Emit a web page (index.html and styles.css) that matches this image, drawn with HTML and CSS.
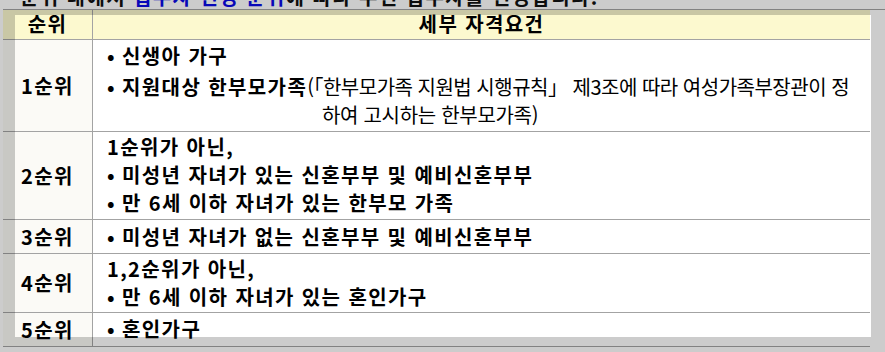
FILE: index.html
```html
<!DOCTYPE html>
<html lang="ko">
<head>
<meta charset="utf-8">
<link rel="stylesheet" href="styles.css">
</head>
<body>
<div class="lead"><div class="lead-text">순위 내에서 <span class="blue">입주자 선정 순위</span>에 따라 우선 입주자를 선정합니다.</div></div>
<div class="grid">
  <div class="c1 head">순위</div>
  <div class="c2 head center">세부 자격요건</div>

  <div class="c1">1순위</div>
  <div class="c2 r1">
    <div class="line"><span class="b">•</span>신생아 가구</div>
    <div class="line gap"><span class="b">•</span>지원대상 한부모가족<span class="reg">(「한부모가족 지원법 시행규칙」 제3조에 따라 여성가족부장관이 정</span></div>
    <div class="line reg indent">하여 고시하는 한부모가족)</div>
  </div>

  <div class="c1">2순위</div>
  <div class="c2 r2">
    <div class="line">1순위가 아닌,</div>
    <div class="line"><span class="b">•</span>미성년 자녀가 있는 신혼부부 및 예비신혼부부</div>
    <div class="line"><span class="b">•</span>만 6세 이하 자녀가 있는 한부모 가족</div>
  </div>

  <div class="c1">3순위</div>
  <div class="c2 r3">
    <div class="line"><span class="b">•</span>미성년 자녀가 없는 신혼부부 및 예비신혼부부</div>
  </div>

  <div class="c1">4순위</div>
  <div class="c2 r4">
    <div class="line">1,2순위가 아닌,</div>
    <div class="line"><span class="b">•</span>만 6세 이하 자녀가 있는 혼인가구</div>
  </div>

  <div class="c1">5순위</div>
  <div class="c2 r5">
    <div class="line"><span class="b">•</span>혼인가구</div>
  </div>
</div>
<div class="shade"></div>
</body>
</html>
```

FILE: styles.css
```css
html, body {
  margin: 0;
  padding: 0;
  background: #ffffff;
  overflow: hidden;
}
body {
  width: 885px;
  height: 352px;
  padding-left: 3px;
  box-sizing: border-box;
  font-family: "Noto Sans CJK KR", "Noto Sans", sans-serif;
  font-size: 20px;
  font-weight: 700;
  letter-spacing: 1.4px;
  color: #000;
  position: relative;
}
.lead {
  height: 9px;
  overflow: hidden;
}
.lead-text {
  margin-top: -13px;
  margin-left: 17px;
  line-height: 20px;
  white-space: nowrap;
  color: #111;
}
.blue { color: #0a0ae6; }

.grid {
  display: grid;
  grid-template-columns: 90px 777px;
  border-top: 1px solid #a3a3a3;
}
.c1, .c2 {
  border-bottom: 1px solid #a3a3a3;
  line-height: 28px;
}
.c1 {
  border-right: 1px solid #a3a3a3;
  background: #fbfaf6;
  display: flex;
  align-items: center;
  justify-content: center;
}
.c2 {
  padding-left: 14px;
  background: #ffffff;
  white-space: nowrap;
}
.head {
  background: #fcf9cf;
  padding-bottom: 1px;
}
.center {
  padding-left: 0;
  text-align: center;
}
.r1 { padding: 2px 0 2px 14px; }
.r2 { padding: 1px 0 2px 14px; }
.r3 { padding: 3px 0 2px 14px; }
.r4 { padding: 1px 0 1px 14px; }
.r5 { padding: 2px 0 3px 14px; }
.gap { margin-top: 3px; }
.b {
  display: inline-block;
  width: 15px;
  letter-spacing: 0;
}
.reg {
  font-weight: 400;
  letter-spacing: -0.5px;
}
.indent {
  padding-left: 215px;
  letter-spacing: -0.3px;
}
.shade {
  position: absolute;
  left: 15px;
  top: 15px;
  width: 856px;
  height: 322px;
  box-shadow: 0 0 0 2000px rgba(0, 0, 0, 0.2);
  pointer-events: none;
}
```
